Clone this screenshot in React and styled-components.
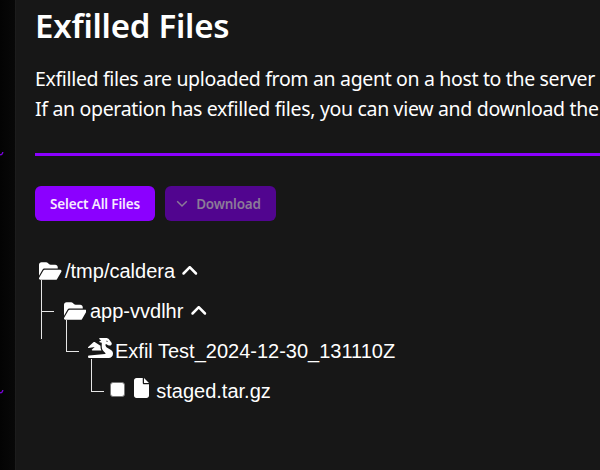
import React from 'react';
import styled, { createGlobalStyle } from 'styled-components';
import { FaFolderOpen, FaDragon, FaFile, FaAngleUp } from 'react-icons/fa6';

const GlobalStyle = createGlobalStyle`
  * { box-sizing: border-box; }
  body { margin: 0; background: #171717; overflow: hidden; }
`;

const Page = styled.div`
  display: flex;
  width: 600px;
  height: 470px;
  overflow: hidden;
  background: #171717;
  color: #fff;
  font-family: 'Noto Sans', 'Open Sans', sans-serif;
`;

const Sidebar = styled.aside`
  display: flex;
  flex-direction: column;
  flex: 0 0 15px;
  background: linear-gradient(90deg, #030303, #080808);
`;

const NavMark = styled.svg`
  display: block;
  width: 5px;
  height: 6px;
  margin-top: ${({ $gap }) => $gap}px;
  fill: none;
  stroke: #7600d8;
  stroke-width: 1.4;
`;

const Content = styled.main`
  flex: 1;
  min-width: 0;
  padding-left: 19px;
  border-left: 1px solid #1c1c1c;
`;

const Title = styled.h2`
  margin: 6px 0 0;
  height: 40px;
  font-size: 33px;
  line-height: 40px;
  font-weight: 600;
  letter-spacing: -0.25px;
  white-space: nowrap;
`;

const Intro = styled.div`
  margin-top: 18px;
  height: 60px;
  font-size: 19.5px;
  line-height: 30px;
  white-space: nowrap;
`;

const Line = styled.div`
  letter-spacing: ${({ $spacing }) => $spacing}px;
`;

const Divider = styled.hr`
  height: 3px;
  margin: 29px 0 30px;
  border: 0;
  background: #8b00ff;
`;

const Actions = styled.div`
  display: flex;
  gap: 10px;
`;

const Button = styled.button`
  display: flex;
  align-items: center;
  justify-content: center;
  gap: 8px;
  width: ${({ $width }) => $width}px;
  height: 35px;
  padding: 0 ${({ $shift }) => $shift || 0}px 0 0;
  border: 0;
  border-radius: 6px;
  background: #8b00ff;
  color: #f6eaff;
  font: 600 13.5px/20px 'Noto Sans', sans-serif;
  letter-spacing: ${({ $spacing }) => $spacing}px;
  white-space: nowrap;
  &:disabled {
    background: #51058f;
    color: #8b7b98;
  }
`;

const ButtonChevron = styled.svg`
  width: 12px;
  height: 12px;
  fill: none;
  stroke: currentColor;
  stroke-width: 1.5;
`;

const Tree = styled.div`
  margin-top: 30px;
  font-family: 'Liberation Sans', Arial, sans-serif;
  font-size: 20px;
  line-height: 40px;
`;

const Row = styled.div`
  display: flex;
  align-items: center;
  height: 40px;
  padding-left: ${({ $indent }) => $indent}px;
  white-space: nowrap;
  svg { flex: none; }
`;

const Connector = styled.span`
  display: flex;
  flex-direction: column;
  align-self: flex-start;
  flex: none;
  width: 13px;
  height: 40px;
  margin: -${({ $rise }) => $rise}px ${({ $after }) => $after}px 0 0;
`;

const Elbow = styled.span`
  flex: 0 0 ${({ $height }) => $height}px;
  border: solid #e6e6e6;
  border-width: 0 0 1px 1px;
`;

const Stem = styled.span`
  flex: 0 0 27px;
  width: 1px;
  background: #e6e6e6;
`;

const Folder = styled(FaFolderOpen)`
  width: 22.5px;
  height: 20px;
`;

const Dragon = styled(FaDragon)`
  width: 25px;
  height: 20px;
  margin-top: -6px;
`;

const File = styled(FaFile)`
  width: 15px;
  height: 20px;
  margin-top: -6px;
`;

const Name = styled.span`
  margin-left: ${({ $before }) => $before || 0}px;
`;

const Toggle = styled(FaAngleUp)`
  width: 17.5px;
  height: 20px;
  margin-left: ${({ $before }) => $before}px;
`;

const Check = styled.input`
  appearance: none;
  width: 15px;
  height: 15px;
  margin: -3px 9px 0 0;
  border: 1px solid #767676;
  border-radius: 3px;
  background: #fff;
`;

function NavEdge({ gap }) {
  return (
    <NavMark $gap={gap} viewBox="0 0 5 6">
      <path d="M0 3.6C1.5 4 2.6 3 2.8 1" />
    </NavMark>
  );
}

export default function App() {
  return (
    <Page>
      <GlobalStyle />
      <Sidebar>
        <NavEdge gap={151} />
        <NavEdge gap={232} />
      </Sidebar>
      <Content>
        <Title>Exfilled Files</Title>
        <Intro>
          <Line $spacing={-0.34}>Exfilled files are uploaded from an agent on a host to the server</Line>
          <Line $spacing={-0.32}>If an operation has exfilled files, you can view and download the</Line>
        </Intro>
        <Divider />
        <Actions>
          <Button $width={120} $spacing={-0.15}>Select All Files</Button>
          <Button $width={111} $spacing={-0.2} $shift={4} disabled>
            <ButtonChevron viewBox="0 0 12 12"><path d="M1.2 3.3 6 8l4.8-4.7" /></ButtonChevron>
            Download
          </Button>
        </Actions>
        <Tree>
          <Row $indent={4}>
            <Folder />
            <Name $before={3.5}>/tmp/caldera</Name>
            <Toggle $before={6} />
          </Row>
          <Row $indent={6}>
            <Connector $rise={11} $after={9.5}>
              <Elbow $height={32} />
              <Stem />
            </Connector>
            <Folder />
            <Name $before={4}>app-vvdlhr</Name>
            <Toggle $before={6.75} />
          </Row>
          <Row $indent={31}>
            <Connector $rise={11} $after={9}>
              <Elbow $height={32} />
            </Connector>
            <Dragon />
            <Name $before={2}>Exfil Test_2024-12-30_131110Z</Name>
          </Row>
          <Row $indent={56}>
            <Connector $rise={12} $after={6}>
              <Elbow $height={33} />
            </Connector>
            <Check type="checkbox" />
            <File />
            <Name $before={7.25}>staged.tar.gz</Name>
          </Row>
        </Tree>
      </Content>
    </Page>
  );
}
